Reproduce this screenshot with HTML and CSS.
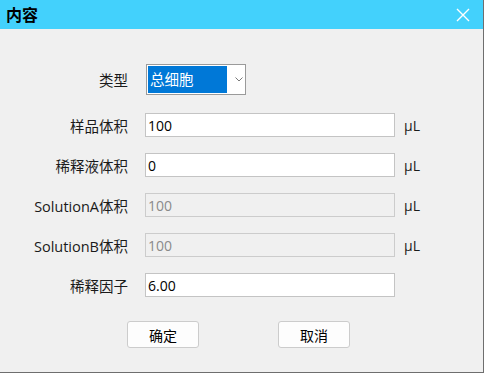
FILE: index.html
```html
<!DOCTYPE html>
<html lang="zh-CN">

<head>
  <meta charset="UTF-8" />
  <meta name="viewport" content="width=device-width, initial-scale=1.0" />
  <title>内容</title>
  <link rel="stylesheet" href="styles.css">
</head>

<body>
  <div class="dialog">
    <!-- Title bar -->
    <div class="title-bar">
      <span class="title">内容</span>
      <svg class="close" width="14" height="14" viewBox="0 0 14 14">
        <path d="M1 1 L13 13 M13 1 L1 13" stroke="#ffffff" stroke-width="1.4" fill="none" />
      </svg>
    </div>

    <form class="form-body">
      <!-- Type -->
      <label class="row-label type-label">类型</label>
      <div class="combo">
        <span class="combo-value">总细胞</span>
        <svg class="combo-arrow" width="8" height="5" viewBox="0 0 8 5">
          <path d="M0.5 0.5 L4 4 L7.5 0.5" stroke="#7a7a7a" stroke-width="1" fill="none" />
        </svg>
      </div>
      <span></span>

      <label class="row-label" for="sample_volume">样品体积</label>
      <input type="text" id="sample_volume" value="100" />
      <span class="unit">µL</span>

      <label class="row-label" for="diluent_volume">稀释液体积</label>
      <input type="text" id="diluent_volume" value="0" />
      <span class="unit">µL</span>

      <label class="row-label" for="solution_a">SolutionA体积</label>
      <input type="text" id="solution_a" value="100" disabled />
      <span class="unit">µL</span>

      <label class="row-label" for="solution_b">SolutionB体积</label>
      <input type="text" id="solution_b" value="100" disabled />
      <span class="unit">µL</span>

      <label class="row-label" for="dilution_factor">稀释因子</label>
      <input type="text" id="dilution_factor" value="6.00" />
      <span></span>
    </form>

    <!-- Buttons -->
    <div class="button-row">
      <button type="button">确定</button>
      <button type="button">取消</button>
    </div>
  </div>
</body>

</html>
```

FILE: styles.css
```css
body {
  margin: 0;
  background-color: #ffffff;
  font-family: "Open Sans", "Noto Sans CJK SC", sans-serif;
  font-size: 14px;
  color: #000000;
}

.dialog {
  width: 483px;
  height: 372px;
  background-color: #f0f0f0;
  border-right: 1px solid #6e6e6e;
  border-bottom: 1px solid #6e6e6e;
}

.title-bar {
  height: 29px;
  background-color: #43d1fc;
  display: flex;
  align-items: center;
  justify-content: space-between;
  padding: 0 13px 0 6px;
}

.title {
  font-family: "Noto Sans CJK SC", sans-serif;
  font-weight: bold;
  font-size: 16px;
  line-height: 29px;
}

.form-body {
  display: grid;
  grid-template-columns: 128px 250px auto;
  row-gap: 16px;
  padding-top: 35px;
  align-items: center;
}

.row-label {
  text-align: right;
  font-size: 14.5px;
  color: #1a1a1a;
}

.type-label {
  margin-bottom: 2px;
}

input {
  margin-left: 17px;
  width: 250px;
  height: 24px;
  box-sizing: border-box;
  border: 1px solid #c4c4c4;
  background-color: #ffffff;
  padding: 0 2px;
  font-family: "Open Sans", sans-serif;
  font-size: 14px;
  color: #000000;
  outline: none;
}

input:disabled {
  background-color: #f0f0f0;
  border-color: #cccccc;
  color: #8a8a8a;
}

.unit {
  margin-left: 26px;
  font-family: "Open Sans", sans-serif;
  font-size: 14px;
  color: #1a1a1a;
}

.combo {
  margin-left: 18px;
  width: 100px;
  height: 31px;
  box-sizing: border-box;
  border: 1px solid #9a9a9a;
  background-color: #ffffff;
  display: flex;
  align-items: center;
  padding: 1px 0 1px 1px;
  margin-bottom: 2px;
}

.combo-value {
  background-color: #0078d7;
  color: #ffffff;
  width: 79px;
  height: 27px;
  line-height: 26px;
  padding-left: 2px;
  box-sizing: border-box;
  font-family: "Noto Sans CJK SC", sans-serif;
  font-size: 14.5px;
}

.combo-arrow {
  margin-left: 8px;
}

.button-row {
  display: flex;
  gap: 79px;
  padding-left: 127px;
  margin-top: 24px;
}

button {
  width: 72px;
  height: 27px;
  background-color: #fdfdfd;
  border: 1px solid #cccccc;
  border-radius: 3px;
  font-family: "Noto Sans CJK SC", sans-serif;
  font-size: 14px;
  color: #000000;
  padding: 0;
}
```
